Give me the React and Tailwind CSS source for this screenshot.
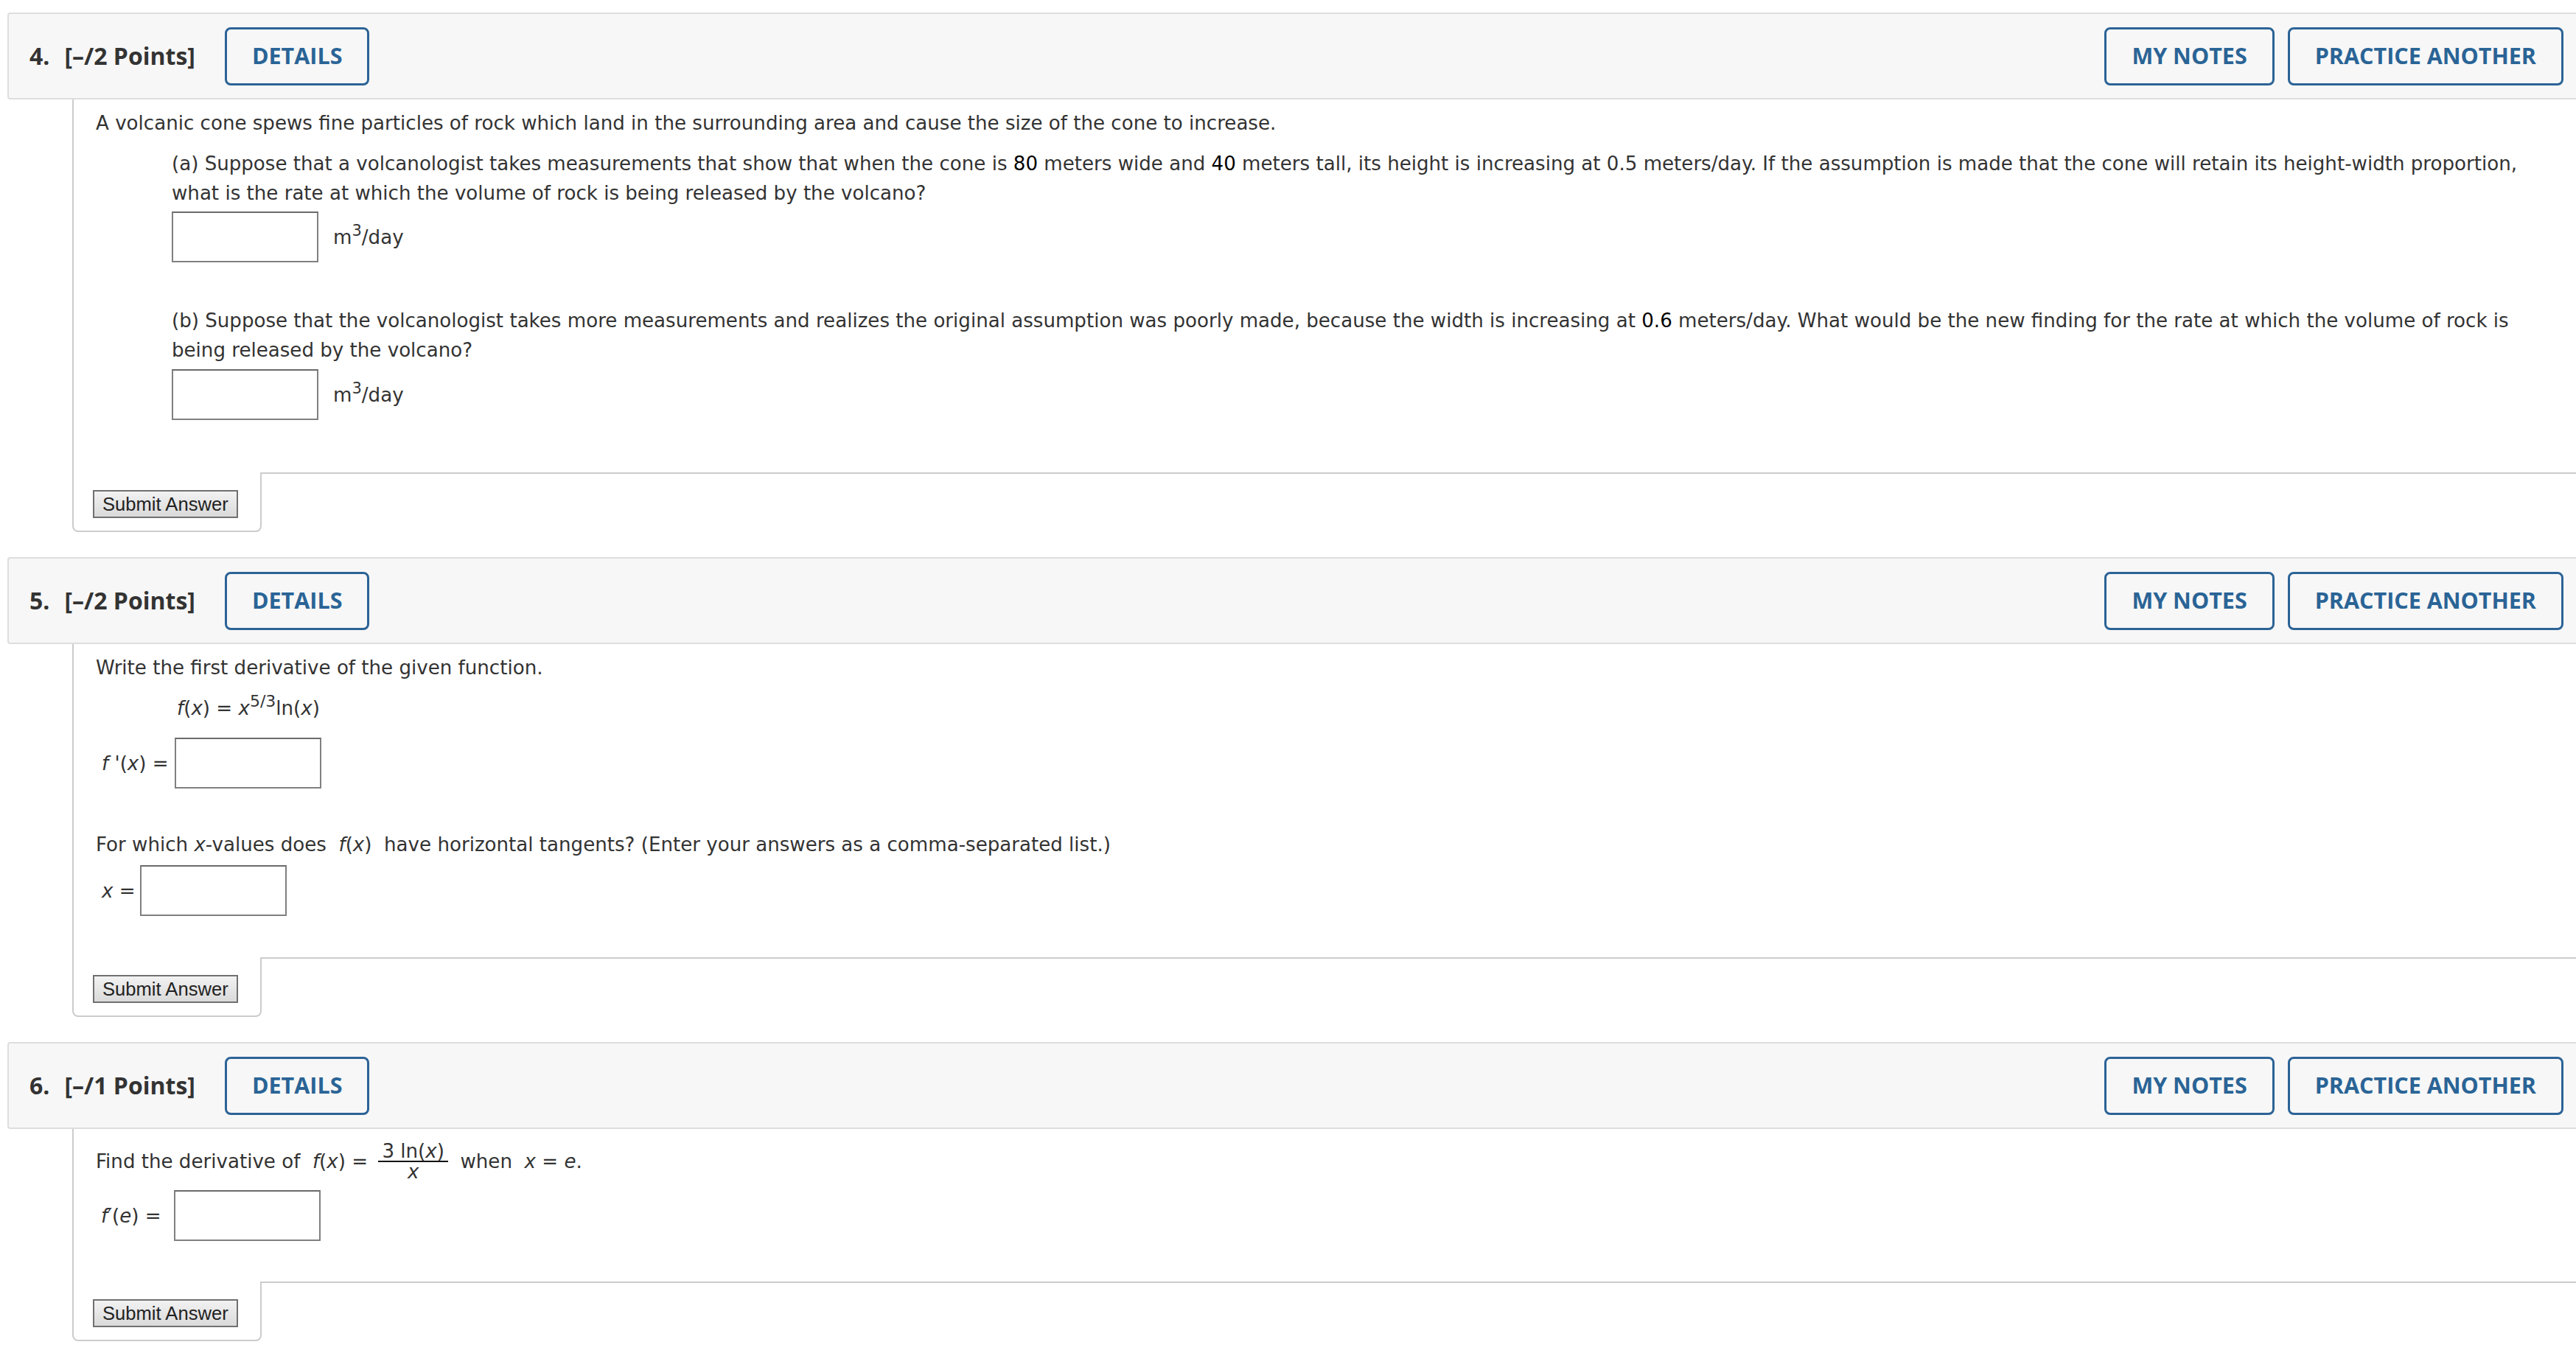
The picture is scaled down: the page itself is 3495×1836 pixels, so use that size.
import React from "react";

const body = "font-['DejaVu_Sans',Verdana,sans-serif] text-[26.1px] leading-[40px] text-[#333]";

function OutlineButton({ children }) {
  return (
    <button className="flex h-[79px] items-center rounded-[8px] border-[3px] border-[#2c6396] bg-[#f7f7f7] px-[34px] font-['Open_Sans',sans-serif] text-[30.5px] font-bold text-[#2a6496]">
      {children}
    </button>
  );
}

function Header({ num, pts }) {
  return (
    <div className="ml-[10px] flex h-[118px] items-center rounded-l-[4px] border-2 border-r-0 border-[#dedede] bg-[#f7f7f7] pl-[28px] pr-[17px]">
      <h2 className="font-['Open_Sans',sans-serif] text-[32px] font-bold text-[#333]">
        <span className="mr-[20px]">{num}.</span>[–/{pts} Points]
      </h2>
      <div className="ml-[40px]">
        <OutlineButton>DETAILS</OutlineButton>
      </div>
      <div className="ml-auto flex gap-[18px]">
        <OutlineButton>MY NOTES</OutlineButton>
        <OutlineButton>PRACTICE ANOTHER</OutlineButton>
      </div>
    </div>
  );
}

function Box({ className = "" }) {
  return (
    <input
      type="text"
      className={"h-[69px] w-[199px] border-2 border-[#808080] border-t-[#6a6a6a] bg-white outline-none " + className}
    />
  );
}

function Footer() {
  return (
    <div className="ml-[98px] flex">
      <div className="h-[81px] w-[257px] rounded-b-[8px] border-2 border-t-0 border-[#cccccc] pl-[26px] pt-[24px]">
        <button className="h-[38px] border-2 border-[#707070] bg-gradient-to-b from-[#f2f2f2] to-[#dadada] px-[11px] font-['Liberation_Sans',Arial,sans-serif] text-[25.6px] leading-[30px] text-[#222]">
          Submit Answer
        </button>
      </div>
      <div className="flex-1 border-t-2 border-[#cccccc]" />
    </div>
  );
}

function Q4() {
  return (
    <section>
      <Header num={4} pts={2} />
      <div className={"ml-[98px] border-l-2 border-[#cccccc] pb-[71px] pl-[30px] pr-[50px] pt-[12px] " + body}>
        <p>
          A volcanic cone spews fine particles of rock which land in the surrounding area and cause the size of the cone to increase.
        </p>
        <div className="mt-[15px] pl-[103px]">
          <p>
            (a) Suppose that a volcanologist takes measurements that show that when the cone is <span className="text-black">80</span> meters wide and{" "}
            <span className="text-black">40</span> meters tall, its height is increasing at 0.5 meters/day. If the assumption is made that the cone will
            retain its height-width proportion, what is the rate at which the volume of rock is being released by the volcano?
          </p>
          <div className="mt-[5px] flex items-center">
            <Box />
            <span className="ml-[20px]">
              m<sup className="text-[21px]">3</sup>/day
            </span>
          </div>
          <p className="mt-[59px]">
            (b) Suppose that the volcanologist takes more measurements and realizes the original assumption was poorly made, because the width is
            increasing at <span className="text-black">0.6</span> meters/day. What would be the new finding for the rate at which the volume of rock is
            being released by the volcano?
          </p>
          <div className="mt-[6px] flex items-center">
            <Box />
            <span className="ml-[20px]">
              m<sup className="text-[21px]">3</sup>/day
            </span>
          </div>
        </div>
      </div>
      <Footer />
    </section>
  );
}

function Q5() {
  return (
    <section className="mt-[34px]">
      <Header num={5} pts={2} />
      <div className={"ml-[98px] border-l-2 border-[#cccccc] pb-[56px] pl-[30px] pr-[50px] pt-[12px] " + body}>
        <p>Write the first derivative of the given function.</p>
        <p className="mt-[15px] pl-[110px]">
          <i>f</i>(<i>x</i>) = <i>x</i>
          <sup className="text-[22px]">5/3</sup>ln(<i>x</i>)
        </p>
        <div className="mt-[20px] flex items-center pl-[8px]">
          <span className="mr-[8px]">
            <i>f</i> '(<i>x</i>) =
          </span>
          <Box />
        </div>
        <p className="mt-[56px]">
          For which <i>x</i>-values does&nbsp; <i>f</i>(<i>x</i>)&nbsp; have horizontal tangents? (Enter your answers as a comma-separated list.)
        </p>
        <div className="mt-[8px] flex items-center pl-[8px]">
          <span className="mr-[6px]">
            <i>x</i> =
          </span>
          <Box />
        </div>
      </div>
      <Footer />
    </section>
  );
}

function Q6() {
  return (
    <section className="mt-[34px] pb-[20px]">
      <Header num={6} pts={1} />
      <div className={"ml-[98px] border-l-2 border-[#cccccc] pb-[55px] pl-[30px] pr-[50px] pt-[17px] " + body}>
        <div className="flex items-center">
          <span>
            Find the derivative of&nbsp; <i>f</i>(<i>x</i>) =&nbsp;
          </span>
          <span className="ml-[6px] inline-flex flex-col items-center">
            <span className="px-[5px] leading-[26px]">
              3 ln(<i>x</i>)
            </span>
            <span className="h-[2px] w-full bg-[#111]" />
            <span className="leading-[26px]">
              <i>x</i>
            </span>
          </span>
          <span>
            &nbsp; when&nbsp; <i>x</i> = <i>e</i>.
          </span>
        </div>
        <div className="mt-[12px] flex items-center pl-[7px]">
          <span className="mr-[17px]">
            <i>f</i>′(<i>e</i>) =
          </span>
          <Box />
        </div>
      </div>
      <Footer />
    </section>
  );
}

export default function App() {
  return (
    <div className="min-h-screen bg-white pt-[17px]">
      <Q4 />
      <Q5 />
      <Q6 />
    </div>
  );
}
